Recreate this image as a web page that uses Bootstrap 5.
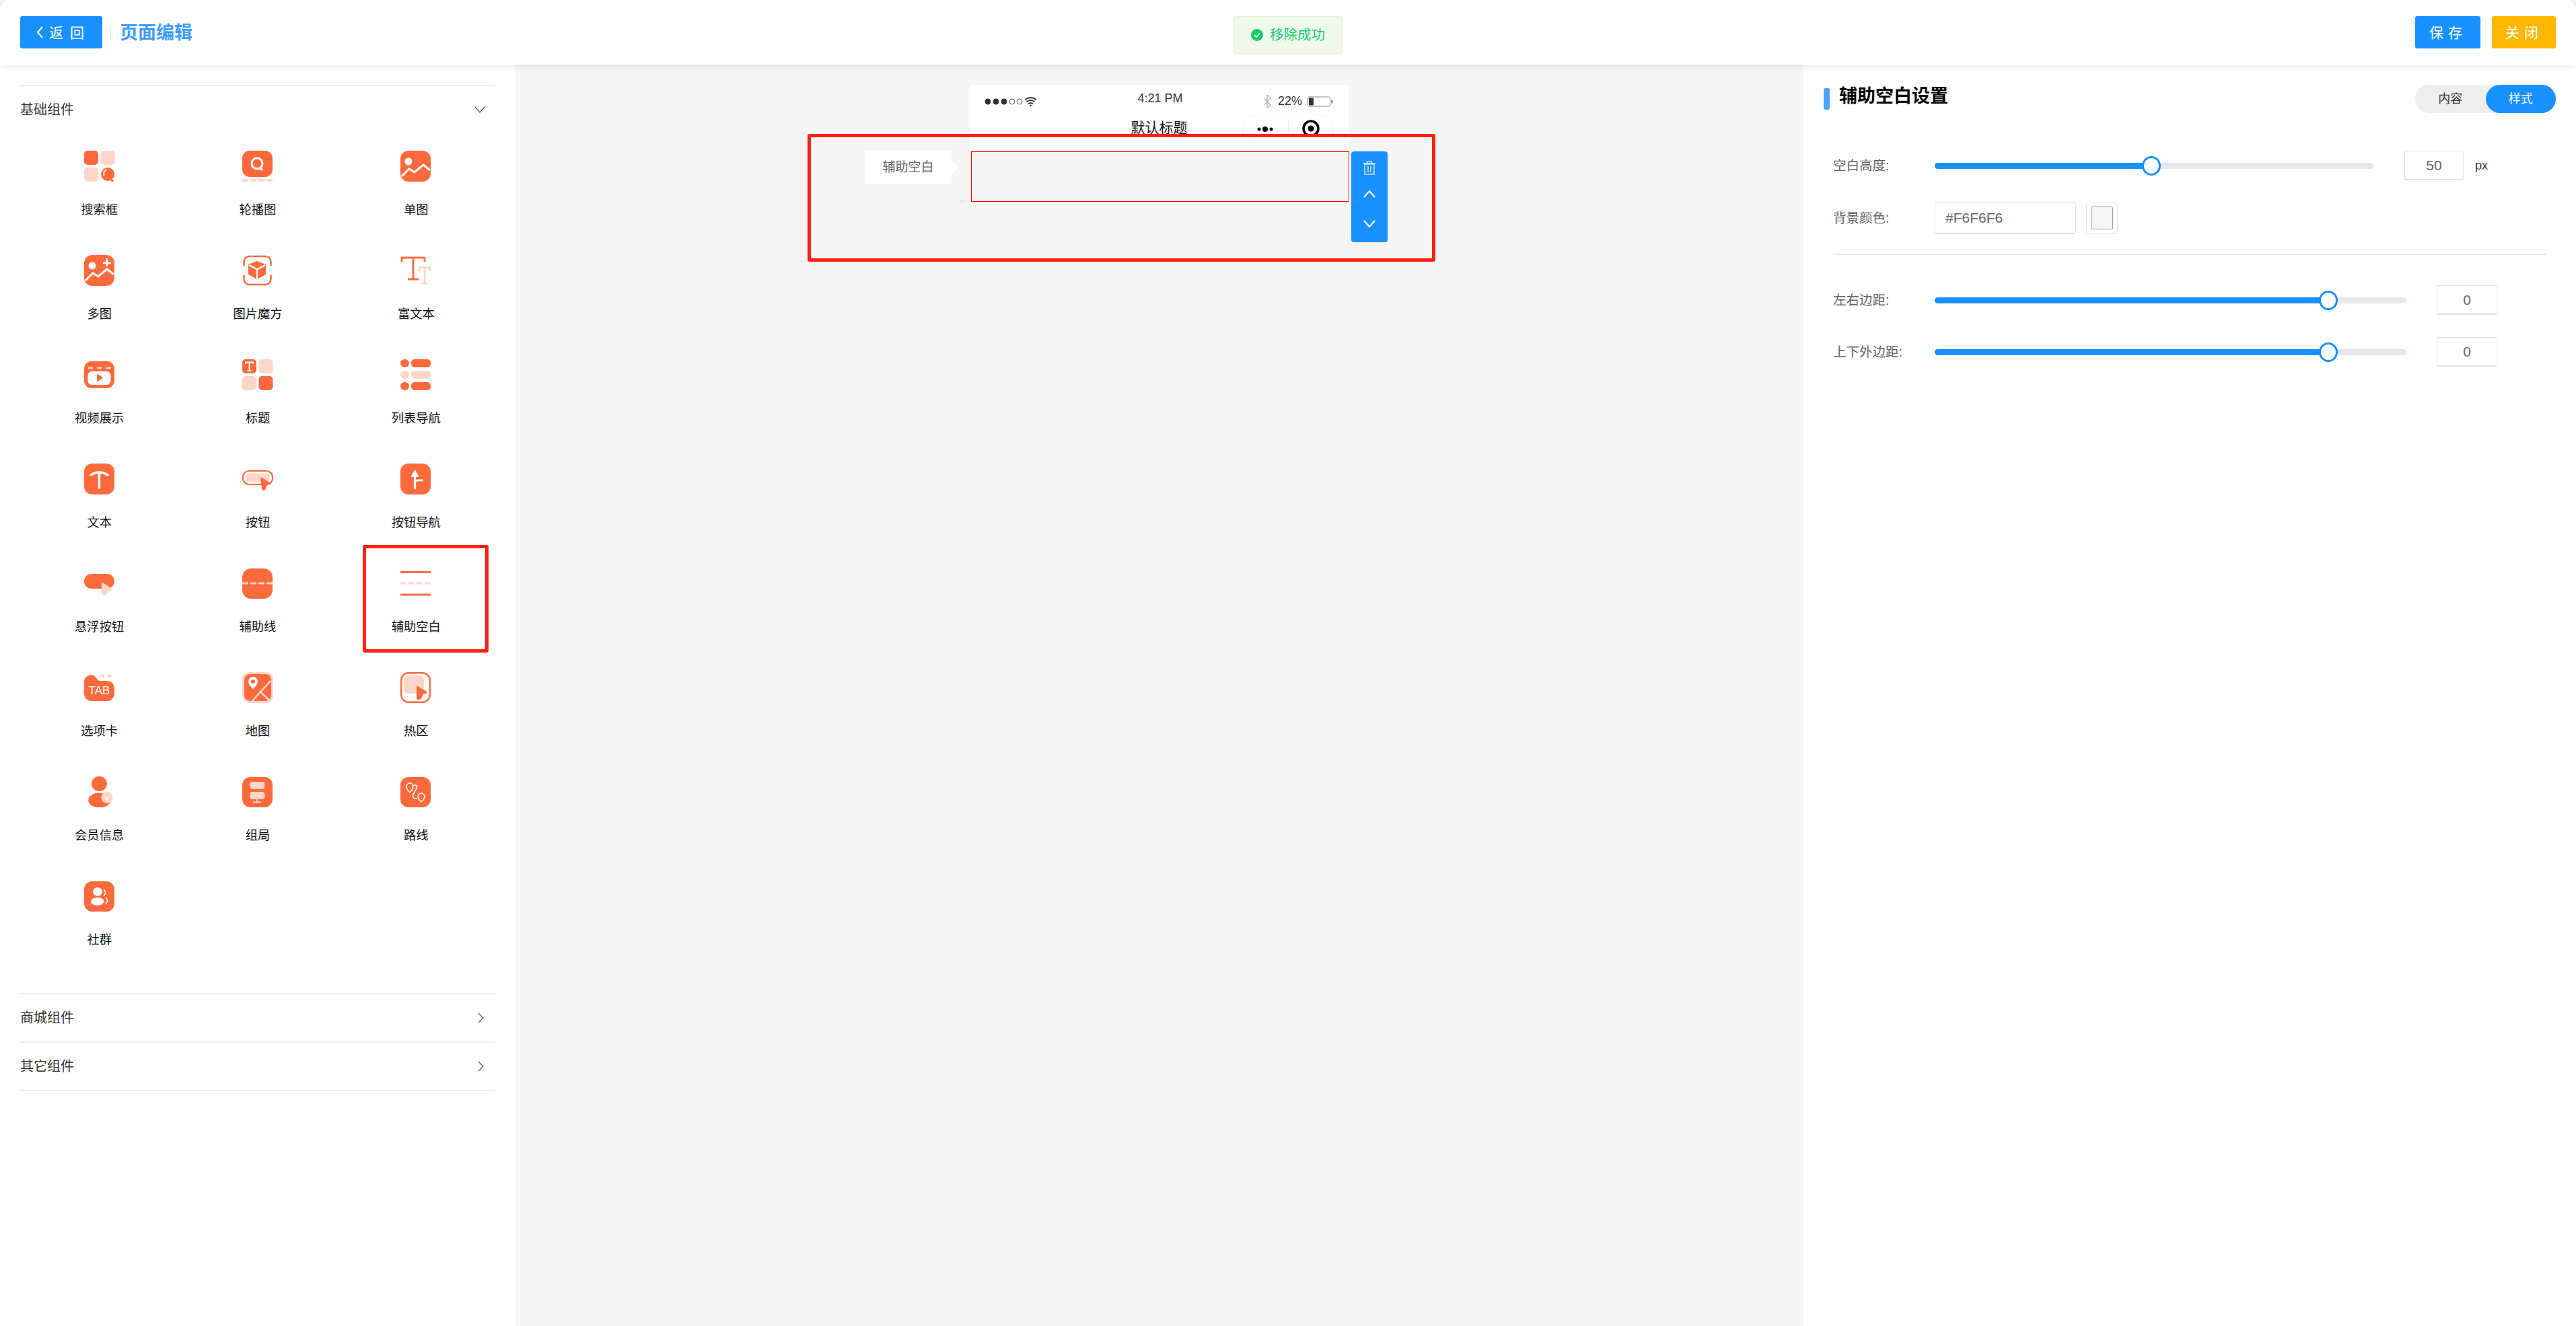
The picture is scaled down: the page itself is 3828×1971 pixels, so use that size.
<!DOCTYPE html>
<html lang="zh-CN">
<head>
    <meta charset="UTF-8">
    <title>页面编辑</title>
    <link href="https://cdn.jsdelivr.net/npm/bootstrap@5.3.0/dist/css/bootstrap.min.css" rel="stylesheet">
    <style>
        html, body { height: 100%; }
        body {
            background: #f5f5f5;
            font-family: "Liberation Sans", "Noto Sans CJK SC", sans-serif;
            color: #222;
            overflow: hidden;
        }
        .page-top {
            height: 96px;
            background: #fff;
            border-radius: 14px 14px 0 0;
            box-shadow: 0 3px 10px rgba(90, 120, 200, .16);
            padding: 0 30px;
            z-index: 5;
        }
        .top-btn {
            border: 0;
            border-radius: 3px;
            color: #fff;
            font-size: 21px;
            line-height: 1;
            height: 48px;
        }
        .btn-back { width: 122px; background: #1890ff; word-spacing: 4px; padding-left: 2px; }
        .top-sep { width: 1px; height: 21px; background: #e4e4e4; margin: 0 13px 0 12px; }
        .page-name { font-size: 27px; font-weight: 700; color: #3d9bff; padding-top: 2px; }
        .btn-save { width: 97px; background: #1890ff; letter-spacing: 7px; padding-left: 7px; }
        .btn-shut { width: 95px; background: #ffb800; letter-spacing: 7px; padding-left: 7px; margin-left: 17px; }
        .toast-ok {
            left: 1832px;
            top: 24px;
            width: 164px;
            height: 56px;
            background: #f0f9eb;
            border: 1px solid #e1f3d8;
            border-radius: 4px;
            color: #19cc6e;
            font-size: 20.500px;
            gap: 10px;
        }
        .work-area { height: 1875px; }

        .comp-side { width: 766px; background: #fff; padding: 30px 30px 0; }
        .comp-group { border-top: 2px solid #eeeef3; }
        .comp-head { height: 70px; font-size: 20px; color: #333; padding-right: 15px; }
        .chev-side { margin-right: 1px; }
        .comp-grid { padding-bottom: 38px; }
        .comp-cell { height: 155px; padding-top: 26px; font-size: 18.300px; color: #111; position: relative; }
        .comp-cell svg { display: block; margin: 0 auto 29px; width: 46px; height: 46px; }
        .comp-cell span { display: block; line-height: 26px; }
        .cell-mark { position: absolute; left: 38px; top: -8px; width: 187px; height: 160px; border: 5px solid #ff2015; border-radius: 3px; }
        .last-rule { border-top: 2px solid #eeeef3; }

        .canvas-pane { flex: 1 1 0; position: relative; background: #f5f5f5; padding-top: 30px; }
        .phone-top { width: 563px; height: 96px; background: #fff; margin-left: 675px; position: relative; }
        .status-row { height: 43px; padding: 6px 23px 0 22px; font-size: 18px; color: #333; position: relative; }
        .status-time { position: absolute; left: 0; right: 0; text-align: center; top: 7px; line-height: 26px; color: #333; padding-left: 3px; }
        .status-pct { margin-left: 1px; }
        .phone-title { position: absolute; left: 0; right: 0; top: 49px; text-align: center; font-size: 21px; line-height: 30px; color: #111; }
        .phone-caps { position: absolute; left: 405px; top: 43px; width: 136px; height: 44px; border: 1px solid #f4f4f4; border-radius: 22px; }
        .phone-caps i { position: absolute; left: 67px; top: 9px; width: 1px; height: 25px; background: #eee; }
        .phone-caps svg { position: absolute; }
        .caps-dots { left: 19px; top: 17px; }
        .caps-ring { left: 88px; top: 8px; }
        .picked-wrap { width: 563px; margin: 3px 0 0 675px; position: relative; }
        .picked-box { height: 75px; margin: 0 -1px 0 2px; border: 1px solid #f00; }
        .picked-tip {
            position: absolute;
            left: -156px;
            top: 0;
            width: 129px;
            height: 48px;
            background: #fff;
            border-radius: 3px;
            color: #666;
            font-size: 19px;
            padding-top: 1px;
        }
        .picked-tip::after {
            content: "";
            position: absolute;
            left: 100%;
            top: 13px;
            border: 11px solid transparent;
            border-left-color: #fff;
        }
        .picked-tools {
            position: absolute;
            left: 567px;
            top: 0;
            width: 54px;
            height: 135px;
            background: #1890ff;
            border-radius: 4px;
        }
        .picked-tools svg { position: absolute; left: 15px; }
        .tool-del { top: 12px; }
        .tool-up { top: 52px; }
        .tool-down { top: 95px; }
        .canvas-mark {
            position: absolute;
            left: 434px;
            top: 103px;
            width: 933px;
            height: 190px;
            border: 5px solid #ff2015;
            border-radius: 3px;
            pointer-events: none;
        }

        .set-pane { width: 1148px; background: #fff; padding: 30px 30px 0; color: #606266; font-size: 19.500px; }
        .set-title-bar { width: 9px; height: 32px; margin-top: 5px; border-radius: 3px; background: #4aa3ff; margin-right: 14px; }
        .set-title { font-size: 27px; font-weight: 700; color: #000; line-height: 32px; padding-top: 1px; }
        .mode-switch { width: 209px; height: 42px; border-radius: 21px; background: #eee; font-size: 18px; }
        .mode-switch div { width: 105px; height: 42px; border-radius: 21px; }
        .mode-off { color: #333; }
        .mode-on { background: #1890ff; color: #fff; }
        .set-row { margin-left: 14px; }
        .set-label { width: 151px; padding-top: 1px; }
        .set-slider { height: 9px; border-radius: 5px; background: #e4e7ed; position: relative; }
        .set-fill { height: 9px; border-radius: 5px; background: #1890ff; position: relative; }
        .set-fill::after {
            content: "";
            position: absolute;
            right: -14px;
            top: -10px;
            width: 28px;
            height: 29px;
            border: 3px solid #1890ff;
            border-radius: 50%;
            background: #fff;
        }
        .num-box {
            height: 44px;
            border: 1px solid #dfe1e8;
            border-bottom-width: 2px;
            border-radius: 3px;
            color: #666;
            font-size: 21px;
        }
        .hex-box {
            width: 210px;
            height: 48px;
            border: 1px solid #dfe1e8;
            border-bottom-width: 2px;
            border-radius: 4px;
            padding-left: 15px;
            color: #666;
            font-size: 21px;
        }
        .swatch-box {
            width: 47px;
            height: 48px;
            margin-left: 15px;
            border: 1px solid #e6e6ea;
            border-radius: 4px;
            padding: 6px;
        }
        .swatch-box div { height: 100%; border: 1px solid #999; border-radius: 2px; background: #f6f6f6; }
        .set-rule { border-top: 2px solid #e8e8ee; margin: 29px 14px 0 14px; }
        .slider-first { margin-top: 56px; }
        .slider-a { width: 652px; }
        .box-a { width: 88px; margin-left: 46px; }
        .px-unit { margin-left: 17px; color: #333; font-size: 18px; }
        .color-row { margin-top: 32px; }
        .margin-row-1 { margin-top: 45px; }
        .margin-row-2 { margin-top: 33px; }
        .slider-b { width: 701px; }
        .box-b { width: 90px; margin-left: 45px; }
    </style>
</head>
<body>
    <!-- top bar -->
    <div class="page-top position-relative d-flex align-items-center">
        <button class="top-btn btn-back d-flex align-items-center justify-content-center gap-2" type="button">
            <svg width="12" height="20" viewBox="0 0 12 20"><path d="M10 2 3 10l7 8" fill="none" stroke="#fff" stroke-width="2"/></svg>
            返 回
        </button>
        <div class="top-sep"></div>
        <div class="page-name">页面编辑</div>
        <div class="toast-ok position-absolute d-flex align-items-center justify-content-center">
            <svg width="18" height="18" viewBox="0 0 18 18"><circle cx="9" cy="9" r="9" fill="#13ce66"/><path d="M5 9.200 8 12l5-5.500" fill="none" stroke="#fff" stroke-width="1.600"/></svg>
            移除成功
        </div>
        <div class="ms-auto d-flex">
            <button class="top-btn btn-save" type="button">保存</button>
            <button class="top-btn btn-shut" type="button">关闭</button>
        </div>
    </div>

    <div class="work-area d-flex">
        <!-- component list -->
        <div class="comp-side">
            <div class="comp-group">
                <div class="comp-head d-flex align-items-center justify-content-between">
                    基础组件
                    <svg width="16" height="10" viewBox="0 0 16 10"><path d="M1 1l7 8 7-8" fill="none" stroke="#555" stroke-width="1.200"/></svg>
                </div>
                <div class="row g-0 text-center comp-grid">
                    <div class="col-4 comp-cell">
                        <svg viewBox="0 0 46 46"><rect width="21" height="21" rx="5" fill="#ff6a3c"/><rect x="24.500" width="21" height="21" rx="5" fill="#ffd6c7"/><rect y="25" width="21" height="21" rx="5" fill="#ffd6c7"/><circle cx="35" cy="35" r="10" fill="#ff6a3c"/><path d="M29.500 37a7 7 0 0 1 4-9" fill="none" stroke="#ffd6c7" stroke-width="2.500"/><path d="M39 41l4 5" stroke="#ff6a3c" stroke-width="3"/></svg>
                        <span>搜索框</span>
                    </div>
                    <div class="col-4 comp-cell">
                        <svg viewBox="0 0 46 46"><rect width="45" height="39" rx="11" fill="#ff6a3c"/><ellipse cx="22" cy="19" rx="8" ry="8" fill="none" stroke="#fff" stroke-width="3"/><path d="M26 25l4 4" stroke="#fff" stroke-width="3"/><path d="M0 44h9m3 0h9m3 0h9m3 0h9" stroke="#ffd6c7" stroke-width="3.500"/></svg>
                        <span>轮播图</span>
                    </div>
                    <div class="col-4 comp-cell">
                        <svg viewBox="0 0 46 46"><rect width="45" height="46" rx="12" fill="#ff6a3c"/><circle cx="12" cy="16" r="5.500" fill="#fff"/><path d="M2 38l11-11 8 5 13-11 10 8" fill="none" stroke="#fff" stroke-width="3"/></svg>
                        <span>单图</span>
                    </div>

                    <div class="col-4 comp-cell">
                        <svg viewBox="0 0 46 46"><rect width="45" height="46" rx="12" fill="#ff6a3c"/><circle cx="12" cy="16" r="5.500" fill="#fff"/><path d="M2 38l11-11 8 5 13-11 10 8" fill="none" stroke="#fff" stroke-width="3"/><path d="M34 5v12M28 12h12" stroke="#fff" stroke-width="2.500"/></svg>
                        <span>多图</span>
                    </div>
                    <div class="col-4 comp-cell">
                        <svg viewBox="0 0 46 46"><path d="M2.500 16V10a8 8 0 0 1 8-8h24a8 8 0 0 1 8 8v6M2.500 30v6a8 8 0 0 0 8 8h24a8 8 0 0 0 8-8v-6" fill="none" stroke="#ff6a3c" stroke-width="2.500"/><path d="M22 9l13 5v15l-13 7-13-7V14z" fill="#ff6a3c"/><path d="M10 15l12 6.500 12-6.500M22 21.500V36" fill="none" stroke="#fff" stroke-width="2.200"/></svg>
                        <span>图片魔方</span>
                    </div>
                    <div class="col-4 comp-cell">
                        <svg viewBox="0 0 46 46"><path d="M28 24v-5.500h16V24M36 18.500v24M32 42.500h8" fill="none" stroke="#ffd6c7" stroke-width="2.600"/><path d="M2 10V5a1 1 0 0 1 1-1h32a1 1 0 0 1 1 1v5M19 4v33M11 36h16" fill="none" stroke="#ff6a3c" stroke-width="2.800"/></svg>
                        <span>富文本</span>
                    </div>

                    <div class="col-4 comp-cell">
                        <svg viewBox="0 0 46 46"><rect width="45" height="40" y="3" rx="11" fill="#ff6a3c"/><path d="M6 13h7m6.500 0h7m6.500 0h7" stroke="#ffd6c7" stroke-width="3.200"/><rect x="5.500" y="18" width="34" height="20" rx="6" fill="#fff"/><path d="M19 23.500q0-2 2-1l6 4q1.500 1 0 2l-6 4q-2 1-2-1z" fill="#ff6a3c"/></svg>
                        <span>视频展示</span>
                    </div>
                    <div class="col-4 comp-cell">
                        <svg viewBox="0 0 46 46"><rect width="21" height="21" rx="5" fill="#ff6a3c"/><rect x="24.500" width="21" height="21" rx="5" fill="#ffd6c7"/><rect y="25" width="21" height="21" rx="5" fill="#ffd6c7"/><rect x="24.500" y="25" width="21" height="21" rx="5" fill="#ff6a3c"/><path d="M5 7V4.500h11V7M10.500 5v12M7.500 17h6" fill="none" stroke="#fff" stroke-width="1.800"/></svg>
                        <span>标题</span>
                    </div>
                    <div class="col-4 comp-cell">
                        <svg viewBox="0 0 46 46"><g fill="#ff6a3c"><rect width="13" height="12" rx="6"/><rect x="16" width="29" height="12" rx="5"/><rect y="34" width="13" height="12" rx="6"/><rect x="16" y="34" width="29" height="12" rx="5"/></g><g fill="#ffd6c7"><rect y="17" width="13" height="12" rx="6"/><rect x="16" y="17" width="29" height="12" rx="5"/></g></svg>
                        <span>列表导航</span>
                    </div>

                    <div class="col-4 comp-cell">
                        <svg viewBox="0 0 46 46"><rect width="45" height="46" rx="12" fill="#ff6a3c"/><path d="M10 17q12.500-8 25 0M22.500 14v22" fill="none" stroke="#fff" stroke-width="3.500" stroke-linecap="round"/></svg>
                        <span>文本</span>
                    </div>
                    <div class="col-4 comp-cell">
                        <svg viewBox="0 0 46 46"><rect x="1" y="11" width="44" height="20" rx="9" fill="#fff" stroke="#ff6a3c" stroke-width="2.200"/><rect x="5" y="14.500" width="36" height="13" rx="6" fill="#ffd6c7"/><path d="M27 22q0-2 2-1l13 8q2 1 0 2l-5 1-3 7q-1 2-3 1-2-1-2-3z" fill="#ff6a3c"/></svg>
                        <span>按钮</span>
                    </div>
                    <div class="col-4 comp-cell">
                        <svg viewBox="0 0 46 46"><rect width="45" height="46" rx="12" fill="#ff6a3c"/><path d="M21.500 37V18" stroke="#fff" stroke-width="3.200" stroke-linecap="round"/><path d="M17 19l4.500-8 4.500 8z" fill="#fff" stroke="#fff" stroke-width="2.200" stroke-linejoin="round"/><path d="M21.500 30q0-5 4-5h8" fill="none" stroke="#fff" stroke-width="2.800"/></svg>
                        <span>按钮导航</span>
                    </div>

                    <div class="col-4 comp-cell">
                        <svg viewBox="0 0 46 46"><rect y="9" width="45" height="22" rx="11" fill="#ff6a3c"/><path d="M26 24q0-3 2-2l13 9q2 1 0 2.500l-5 1.500-3 5q-2 2-5 1-2-1-2-3z" fill="#ffd6c7"/></svg>
                        <span>悬浮按钮</span>
                    </div>
                    <div class="col-4 comp-cell">
                        <svg viewBox="0 0 46 46"><rect y="1" width="45" height="45" rx="13" fill="#ff6a3c"/><path d="M0 23h9m3 0h9m3 0h9m3 0h9" stroke="#ffd6c7" stroke-width="3"/></svg>
                        <span>辅助线</span>
                    </div>
                    <div class="col-4 comp-cell">
                        <svg viewBox="0 0 46 46"><path d="M0 6.500h45M0 40h45" stroke="#ff6a3c" stroke-width="3.200"/><path d="M0 23h9m3 0h9m3 0h9m3 0h9" stroke="#ffd6c7" stroke-width="3"/></svg>
                        <span>辅助空白</span>
                        <div class="cell-mark"></div>
                    </div>

                    <div class="col-4 comp-cell">
                        <svg viewBox="0 0 46 46"><path d="M0 15a10 10 0 0 1 19-5q2 3 6 3h9a11 11 0 0 1 11 11v8a11 11 0 0 1-11 11H11A11 11 0 0 1 0 32z" fill="#ff6a3c"/><path d="M25 5.500h3.500m7.500 0h3.500" stroke="#ffd6c7" stroke-width="3.500" stroke-linecap="round"/><text x="22.500" y="33" text-anchor="middle" font-family="Liberation Sans, sans-serif" font-size="17" fill="#fff">TAB</text></svg>
                        <span>选项卡</span>
                    </div>
                    <div class="col-4 comp-cell">
                        <svg viewBox="0 0 46 46"><rect x="1.500" y="1.500" width="43" height="43" rx="10" fill="#ff6a3c" stroke="#ffd6c7" stroke-width="3"/><path d="M42 13 14 44M26 28l15 15" stroke="#ffd6c7" stroke-width="2.600"/><path d="M16 25q-7-6-7-11a7 7 0 0 1 14 0q0 5-7 11z" fill="#fff"/><circle cx="16" cy="14" r="3" fill="#ff6a3c"/></svg>
                        <span>地图</span>
                    </div>
                    <div class="col-4 comp-cell">
                        <svg viewBox="0 0 46 46"><rect x="1.200" y="1.200" width="42.600" height="43.600" rx="11" fill="#fff" stroke="#ff6a3c" stroke-width="2.400"/><rect x="5" y="5" width="30" height="27" rx="7" fill="#ffd6c7"/><path d="M24 23q0-3 2-2l13 8q2 1 0 2.500l-5 1.500-3 6q-2 3-5 2-2-1-2-3z" fill="#ff6a3c"/></svg>
                        <span>热区</span>
                    </div>

                    <div class="col-4 comp-cell">
                        <svg viewBox="0 0 46 46"><ellipse cx="22.500" cy="11" rx="11.500" ry="11" fill="#ff6a3c"/><ellipse cx="22.800" cy="35.500" rx="16.500" ry="11" fill="#ff6a3c"/><circle cx="34" cy="31.500" r="8.500" fill="#ffd6c7"/><path d="M31 29l3 6 3-6" fill="none" stroke="#fff" stroke-width="1.300"/></svg>
                        <span>会员信息</span>
                    </div>
                    <div class="col-4 comp-cell">
                        <svg viewBox="0 0 46 46"><rect y="1" width="45" height="45" rx="12" fill="#ff6a3c"/><path d="M15 8h17a1 1 0 0 1 1 1v7a3 3 0 0 1-3 3H15q-2 0-3-2l-.5-3q-.5-2 0-3 .5-3 3.500-3zM14 23h16q2 0 3 2l.5 3q.5 2 0 3l-.5 1q-1 2-3 2H14a2 2 0 0 1-2-2v-7a2 2 0 0 1 2-2z" fill="#ffd6c7"/><path d="M22 33v5m-6 .5h12" stroke="#ffd6c7" stroke-width="1.800"/></svg>
                        <span>组局</span>
                    </div>
                    <div class="col-4 comp-cell">
                        <svg viewBox="0 0 46 46"><rect y="1" width="45" height="45" rx="12" fill="#ff6a3c"/><path d="M14 24q-5-5-5-9a5 5 0 0 1 10 0q0 4-5 9zM31 38q-5-5-5-8a5 5 0 0 1 10 0q0 3-5 8z" fill="none" stroke="#fff" stroke-width="1.500"/><path d="M20 13h2q4 1 2 5l-5 9q-2 5 3 6h3" fill="none" stroke="#fff" stroke-width="1.600"/></svg>
                        <span>路线</span>
                    </div>

                    <div class="col-4 comp-cell">
                        <svg viewBox="0 0 46 46"><rect y="1" width="45" height="45" rx="12" fill="#ff6a3c"/><ellipse cx="20" cy="16.500" rx="7" ry="6.500" fill="#fff"/><ellipse cx="19.800" cy="31" rx="9.800" ry="6" fill="#fff"/><path d="M29 13q5 5 0 10M32 25q5 5 0 10" fill="none" stroke="#fff" stroke-width="1.400"/></svg>
                        <span>社群</span>
                    </div>
                </div>
            </div>
            <div class="comp-group">
                <div class="comp-head d-flex align-items-center justify-content-between">
                    商城组件
                    <svg width="10" height="16" viewBox="0 0 10 16" class="chev-side"><path d="M1 1l7 7-7 7" fill="none" stroke="#555" stroke-width="1.200"/></svg>
                </div>
            </div>
            <div class="comp-group">
                <div class="comp-head d-flex align-items-center justify-content-between">
                    其它组件
                    <svg width="10" height="16" viewBox="0 0 10 16" class="chev-side"><path d="M1 1l7 7-7 7" fill="none" stroke="#555" stroke-width="1.200"/></svg>
                </div>
            </div>
            <div class="last-rule"></div>
        </div>

        <!-- phone canvas -->
        <div class="canvas-pane">
            <div class="phone-top">
                <div class="status-row d-flex align-items-center">
                    <svg width="78" height="16" viewBox="0 0 78 16">
                        <g fill="#333"><circle cx="5" cy="8" r="4.500"/><circle cx="17" cy="8" r="4.500"/><circle cx="29" cy="8" r="4.500"/></g>
                        <g fill="none" stroke="#555"><circle cx="41" cy="8" r="4"/><circle cx="52" cy="8" r="4"/></g>
                        <path d="M60 5.500q8.500-7 17 0M62.500 8.500q6-5 12 0M65 11.500q3.500-3 7 0" fill="none" stroke="#333" stroke-width="1.800"/><path d="M66.500 13l2 2.500 2-2.500z" fill="#333"/>
                    </svg>
                    <div class="status-time">4:21 PM</div>
                    <div class="ms-auto d-flex align-items-center">
                        <svg width="14" height="20" viewBox="0 0 14 20" class="me-2"><path d="M2 5l10 10-5 5V0l5 5L2 15" fill="none" stroke="#bbb" stroke-width="1.500"/></svg>
                        <span class="status-pct">22%</span>
                        <svg width="38" height="16" viewBox="0 0 38 16" class="ms-2"><rect x=".5" y="1" width="33" height="14" rx="2" fill="#fff" stroke="#888"/><rect x="2" y="2.500" width="7" height="11" fill="#333"/><rect x="35.500" y="5.500" width="1.500" height="5" fill="#333"/></svg>
                    </div>
                </div>
                <div class="phone-title">默认标题</div>
                <div class="phone-caps">
                    <svg class="caps-dots" width="28" height="10" viewBox="0 0 28 10"><circle cx="5" cy="5" r="2.500"/><circle cx="14" cy="5" r="4"/><circle cx="23" cy="5" r="2.500"/></svg>
                    <i></i>
                    <svg class="caps-ring" width="26" height="26" viewBox="0 0 26 26"><circle cx="13" cy="13" r="11" fill="none" stroke="#000" stroke-width="3.500"/><circle cx="13" cy="13" r="4.500"/></svg>
                </div>
            </div>
            <div class="picked-wrap">
                <div class="picked-box"></div>
                <div class="picked-tip d-flex align-items-center justify-content-center">辅助空白</div>
                <div class="picked-tools">
                    <svg class="tool-del" width="24" height="24" viewBox="0 0 24 24"><path d="M5 7h14v15H5zM3 6h18M9 6V3h6v3M10 10v9M14 10v9" fill="none" stroke="#cfe6ff" stroke-width="1.500"/></svg>
                    <svg class="tool-up" width="24" height="24" viewBox="0 0 24 24"><path d="M4 16l8-9 8 9" fill="none" stroke="#fff" stroke-width="2.200"/></svg>
                    <svg class="tool-down" width="24" height="24" viewBox="0 0 24 24"><path d="M4 8l8 9 8-9" fill="none" stroke="#fff" stroke-width="2.200"/></svg>
                </div>
            </div>
            <div class="canvas-mark"></div>
        </div>

        <!-- settings -->
        <div class="set-pane">
            <div class="d-flex align-items-start">
                <div class="set-title-bar"></div>
                <div class="set-title">辅助空白设置</div>
                <div class="mode-switch d-flex ms-auto text-center">
                    <div class="mode-off d-flex align-items-center justify-content-center">内容</div>
                    <div class="mode-on d-flex align-items-center justify-content-center">样式</div>
                </div>
            </div>

            <div class="set-row d-flex align-items-center slider-first">
                <div class="set-label">空白高度:</div>
                <div class="set-slider slider-a"><div class="set-fill" style="width: 49.4%"></div></div>
                <div class="num-box box-a d-flex align-items-center justify-content-center">50</div>
                <div class="px-unit">px</div>
            </div>
            <div class="set-row d-flex align-items-center color-row">
                <div class="set-label">背景颜色:</div>
                <div class="hex-box d-flex align-items-center">#F6F6F6</div>
                <div class="swatch-box"><div></div></div>
            </div>
            <div class="set-rule"></div>
            <div class="set-row d-flex align-items-center margin-row-1">
                <div class="set-label">左右边距:</div>
                <div class="set-slider slider-b"><div class="set-fill" style="width: 83.5%"></div></div>
                <div class="num-box box-b d-flex align-items-center justify-content-center">0</div>
            </div>
            <div class="set-row d-flex align-items-center margin-row-2">
                <div class="set-label">上下外边距:</div>
                <div class="set-slider slider-b"><div class="set-fill" style="width: 83.5%"></div></div>
                <div class="num-box box-b d-flex align-items-center justify-content-center">0</div>
            </div>
        </div>
    </div>
    <script src="https://cdn.jsdelivr.net/npm/bootstrap@5.3.0/dist/js/bootstrap.bundle.min.js"></script>
</body>
</html>
